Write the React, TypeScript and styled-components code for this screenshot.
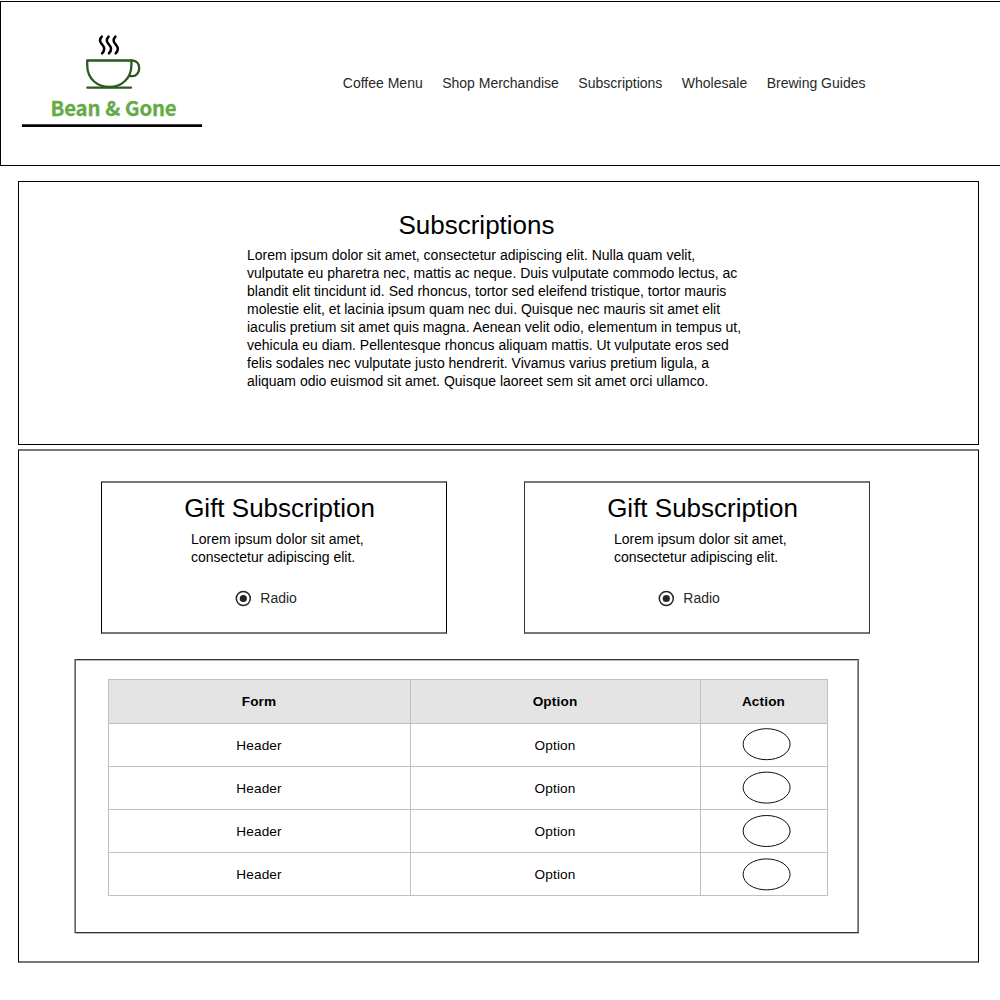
import React from "react";
import styled, { createGlobalStyle } from "styled-components";

const GlobalStyle = createGlobalStyle`
  *, *::before, *::after { box-sizing: border-box; }
  html, body { margin: 0; padding: 0; background: #fff; }
  body {
    font-family: "Liberation Sans", Arial, Helvetica, sans-serif;
    font-size: 14px;
    line-height: 18px;
    color: #000;
    overflow: hidden;
  }
  h2, h3, p { margin: 0; font-weight: 400; }
`;

const Page = styled.div`
  width: 1000px;
  height: 1000px;
  padding-top: 1px;
  overflow: hidden;
`;

const Header = styled.header`
  display: flex;
  align-items: flex-start;
  height: 165px;
  border: 1px solid #000;
  border-right: 0;
`;

const Brand = styled.div`
  display: flex;
  flex-direction: column;
  align-items: center;
  width: 180px;
  height: 125px;
  margin-left: 21px;
  border-bottom: 2px solid #000;
  box-shadow: inset 0 -1px 0 #444;
`;

const Cup = styled.svg`
  display: block;
  width: 60px;
  height: 60px;
  margin-top: 30px;
`;

const BrandName = styled.div`
  font-family: "Noto Sans CJK SC", "Noto Sans", sans-serif;
  font-weight: 700;
  font-size: 20.3px;
  letter-spacing: -0.15px;
  word-spacing: 0.5px;
  line-height: 28px;
  margin-top: 1px;
  padding-left: 3px;
  color: #63ab45;
  -webkit-text-stroke: 0.3px #63ab45;
  white-space: nowrap;
`;

const Nav = styled.nav`
  display: flex;
  gap: 19.45px;
  margin: 72px 0 0 140.8px;
`;

const NavLink = styled.a`
  color: #282828;
  white-space: nowrap;
`;

const Intro = styled.section`
  width: 961px;
  height: 264px;
  margin: 15px 0 0 18px;
  padding: 28px 0 0 228px;
  border: 1px solid #000;
`;

const Title = styled.h2`
  width: 459px;
  font-size: 26px;
  line-height: 30px;
  text-align: center;
`;

const Copy = styled.p`
  width: 500px;
  margin-top: 6px;
`;

const Plans = styled.section`
  width: 961px;
  height: 514px;
  margin: 4px 0 0 18px;
  border: 1px solid #000;
  border-top: 2px solid #777;
  border-bottom: 2px solid #777;
`;

const CardRow = styled.div`
  display: flex;
  gap: 77px;
  padding: 30px 0 0 82px;
`;

const Card = styled.article<{ $edge: string }>`
  width: 346px;
  height: 153px;
  padding: 10px 0 0 82px;
  border: 1px solid ${(p) => p.$edge};
  border-top: 2px solid #777;
  border-bottom: 2px solid #777;
`;

const CardTitle = styled.h3`
  width: 191px;
  font-size: 26px;
  line-height: 30px;
  text-align: center;
  white-space: nowrap;
`;

const CardCopy = styled.p`
  width: 190px;
  margin: 7px 0 0 7px;
`;

const RadioLabel = styled.label`
  display: flex;
  align-items: center;
  gap: 7.3px;
  margin: 23px 0 0 51px;
  color: #282828;
`;

const RadioIcon = styled.svg`
  display: block;
  width: 18px;
  height: 18px;
`;

const TablePanel = styled.div`
  width: 784px;
  height: 274px;
  margin: 25px 0 0 56px;
  padding: 19px 0 0 32px;
  border: 1px solid #333;
  border-left-color: #666;
  border-right-color: #666;
  box-shadow: inset 0 1px 0 #bbb, 0 1px 0 #bbb, -1px 0 0 #999, inset -1px 0 0 #999;
`;

const Grid = styled.div`
  display: grid;
  grid-template-columns: 302px 290px 127px;
  grid-template-rows: 44px repeat(4, 43px);
  width: 720px;
  border-top: 1px solid #c0c0c0;
  border-left: 1px solid #c0c0c0;
`;

const Cell = styled.div<{ $head?: boolean }>`
  display: flex;
  align-items: center;
  justify-content: center;
  padding-top: ${(p) => (p.$head ? 0 : 2)}px;
  border-right: 1px solid #c0c0c0;
  border-bottom: 1px solid #c0c0c0;
  font-size: 13.6px;
  letter-spacing: 0.15px;
  text-indent: -1px;
  font-weight: ${(p) => (p.$head ? 700 : 400)};
  background: ${(p) => (p.$head ? "#e4e4e4" : "#fff")};
`;

const ActionCell = styled(Cell)`
  padding-top: 0;
`;

const Oval = styled.svg`
  display: block;
  width: 126px;
  height: 42px;
`;

const LINKS = ["Coffee Menu", "Shop Merchandise", "Subscriptions", "Wholesale", "Brewing Guides"];
const OVAL_CENTERS = [20.2, 20.6, 21, 21.4];

function CoffeeCup() {
  return (
    <Cup viewBox="0 0 60 60" fill="none" strokeLinecap="round" strokeLinejoin="round">
      <g stroke="#000" strokeWidth="2.5">
        {[0, 6.8, 13.6].map((dx) => (
          <path
            key={dx}
            transform={`translate(${dx} 0)`}
            d="M19.8 4.6C17.2 7.3 17.5 9.6 19.6 11.8L20.7 13.2C22.7 15.6 22.8 18.6 20.1 21.3"
          />
        ))}
      </g>
      <g stroke="#2a5a1c" strokeWidth="2.3">
        <path d="M5.2 28.5H49.4V33C49.4 47 39 55 27.3 55S5.2 47 5.2 33Z" />
        <path d="M49.4 28.5H50.3C54.6 28.5 57.2 31.8 57.2 36.2C57.2 40.8 54 44.2 50.3 44.2C49 44.2 48.2 44.1 47.3 43.8" />
        <path d="M5.4 55.7H49" />
      </g>
    </Cup>
  );
}

function GiftCard({ edge }: { edge: string }) {
  return (
    <Card $edge={edge}>
      <CardTitle>Gift Subscription</CardTitle>
      <CardCopy>Lorem ipsum dolor sit amet, consectetur adipiscing elit.</CardCopy>
      <RadioLabel>
        <RadioIcon viewBox="0 0 18 18">
          <circle cx="8.3" cy="9.5" r="7" fill="none" stroke="#242424" strokeWidth="1.5" />
          <circle cx="8.3" cy="9.5" r="3.6" fill="#242424" />
        </RadioIcon>
        Radio
      </RadioLabel>
    </Card>
  );
}

export default function App() {
  return (
    <>
      <GlobalStyle />
      <Page>
        <Header>
          <Brand>
            <CoffeeCup />
            <BrandName>Bean &amp; Gone</BrandName>
          </Brand>
          <Nav>
            {LINKS.map((label) => (
              <NavLink key={label}>{label}</NavLink>
            ))}
          </Nav>
        </Header>
        <Intro>
          <Title>Subscriptions</Title>
          <Copy>
            Lorem ipsum dolor sit amet, consectetur adipiscing elit. Nulla quam velit, vulputate eu pharetra nec,
            mattis ac neque. Duis vulputate commodo lectus, ac blandit elit tincidunt id. Sed rhoncus, tortor sed
            eleifend tristique, tortor mauris molestie elit, et lacinia ipsum quam nec dui. Quisque nec mauris sit
            amet elit iaculis pretium sit amet quis magna. Aenean velit odio, elementum in tempus ut, vehicula eu
            diam. Pellentesque rhoncus aliquam mattis. Ut vulputate eros sed felis sodales nec vulputate justo
            hendrerit. Vivamus varius pretium ligula, a aliquam odio euismod sit amet. Quisque laoreet sem sit amet
            orci ullamco.
          </Copy>
        </Intro>
        <Plans>
          <CardRow>
            <GiftCard edge="#000" />
            <GiftCard edge="#333" />
          </CardRow>
          <TablePanel>
            <Grid>
              <Cell $head>Form</Cell>
              <Cell $head>Option</Cell>
              <Cell $head>Action</Cell>
              {OVAL_CENTERS.map((cy) => (
                <React.Fragment key={cy}>
                  <Cell>Header</Cell>
                  <Cell>Option</Cell>
                  <ActionCell>
                    <Oval viewBox="0 0 126 42">
                      <ellipse cx="65.6" cy={cy} rx="23.5" ry="15.5" fill="#fff" stroke="#000" strokeWidth="0.95" />
                    </Oval>
                  </ActionCell>
                </React.Fragment>
              ))}
            </Grid>
          </TablePanel>
        </Plans>
      </Page>
    </>
  );
}
